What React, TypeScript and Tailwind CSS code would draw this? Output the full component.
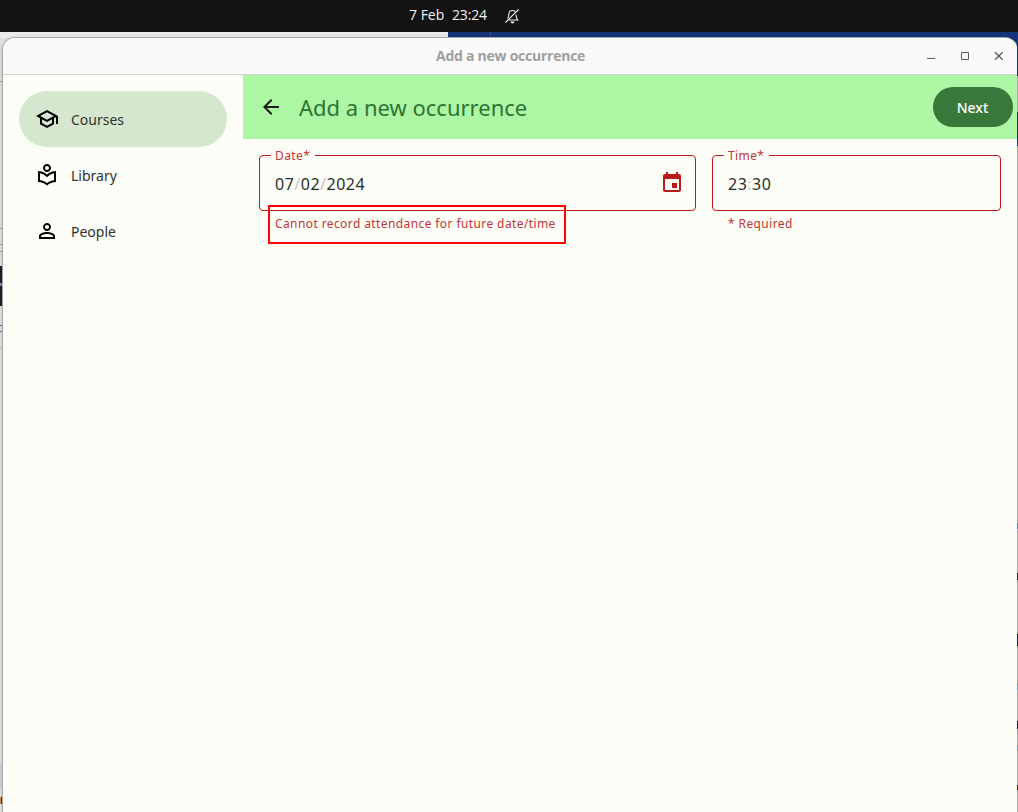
import type { ReactNode } from "react";
import {
  MdArrowBack,
  MdEvent,
  MdOutlineLocalLibrary,
  MdOutlineSchool,
  MdPersonOutline,
} from "react-icons/md";

function MutedBell() {
  return (
    <svg width="16" height="16" viewBox="0 0 16 16" fill="none" stroke="#f0f0f0" strokeWidth="1.1">
      <path d="M3.600 10.500c1-1 1.100-2 1.200-4.200C5 3.700 6.300 2.500 8.500 2.500c1.200 0 2.100.4 2.700 1.100M12 6.500c.1 2.500.4 4.200 1.700 5.500H5" />
      <path d="M1.500 14.500 14.500 1.500" />
      <path d="M6.500 13.500h4c-.3 1.300-1 1.900-2 1.900s-1.700-.6-2-1.900z" fill="#f0f0f0" stroke="none" />
    </svg>
  );
}

function TopBar() {
  return (
    <header className="flex h-8 shrink-0 items-start bg-[#131313] pt-[5px] pl-[409px] font-['Open_Sans','Noto_Sans',sans-serif] text-[14px] leading-5 text-[#f2f2f2]">
      <span className="w-[43px] whitespace-nowrap">7 Feb</span>
      <span className="w-[52px] tracking-[-0.15px]">23:24</span>
      <span className="pt-[3px]">
        <MutedBell />
      </span>
    </header>
  );
}

function TitleBar() {
  return (
    <div className="flex h-[37px] shrink-0 items-center border-b border-[#d3d3d3] bg-[#fafafa]">
      <div className="w-[915px] pl-[433px] font-['Open_Sans','Noto_Sans',sans-serif] text-[14px] leading-5 font-bold tracking-[-0.25px] whitespace-nowrap text-[#9f9f9f]">
        Add a new occurrence
      </div>
      <svg width="96" height="16" viewBox="0 0 96 16" fill="none" stroke="#5c5c5c">
        <path d="M9 10.500h8" />
        <path d="M43.500 4.500h7v7h-7z" />
        <path d="m77 4.200 7.600 7.600M84.600 4.200 77 11.800" strokeWidth="1.300" />
      </svg>
    </div>
  );
}

function NavItem({ icon, label, active }: { icon: ReactNode; label: string; active?: boolean }) {
  return (
    <div
      className={`flex h-14 items-center gap-3 rounded-full pl-4 text-[14px] text-[#30342f] ${
        active ? "bg-[#d5e8cf]" : ""
      }`}
    >
      <span className="text-2xl text-black">{icon}</span>
      <span className="pt-px">{label}</span>
    </div>
  );
}

function Field({
  label,
  helper,
  width,
  icon,
  children,
}: {
  label: string;
  helper: string;
  width: string;
  icon?: ReactNode;
  children: ReactNode;
}) {
  return (
    <div className={width}>
      <div className="relative flex h-14 items-center justify-between rounded-[4px] border border-[#ba1a1a] pr-[11px] pl-[15px]">
        <span className="absolute -top-2 left-[11px] bg-[#fcfdf6] pr-[5px] pl-1 text-[12px] leading-4 tracking-[0.4px] text-[#c33536]">
          {label}
        </span>
        <span className="pt-px text-[16px] leading-6 tracking-[0.5px] text-[#2b2d2a]">{children}</span>
        {icon}
      </div>
      <p className="pt-[5px] pl-4 text-[12px] leading-4 tracking-[0.4px] whitespace-nowrap text-[#c33536]">{helper}</p>
    </div>
  );
}

function Sep({ children }: { children: string }) {
  return <span className="text-[#c4c6c0]">{children}</span>;
}

/* Slivers of the windows behind the active one, top to bottom. */
const leftEdge = [
  "h-[43px] bg-[#e1e2e2]",
  "h-[147px] border-t border-[#aaaaaa]",
  "h-4 border-t border-[#aaaaaa]",
  "h-2 border-y border-r border-[#999999]",
  "h-3.5",
  "h-[17px] bg-[#201f28]",
  "h-[3px] bg-[#7891b0]",
  "h-5 bg-[#201f28]",
  "h-[19px]",
  "h-[7px] border-y border-[#4867c0]",
  "h-[15px]",
  "h-[416px] border-t border-[#bbbbbb]",
  "h-[26px] bg-[#d3d7df]",
  "h-2",
  "h-[7px] border-l border-[#d8934a] bg-[#23375c]",
];

const rightEdge = [
  "h-[38px] bg-[#14357a]",
  "h-9 bg-[#a9a9ae]",
  "h-[34px] bg-[#173770]",
  "h-[377px]",
  "h-1.5 bg-[#647ba5]",
  "h-11",
  "h-[7px] bg-[#272522]",
  "h-[54px]",
  "h-3 bg-[#15243c]",
  "h-[37px]",
  "h-[7px] bg-[#7c9db2]",
  "h-[31px]",
  "h-2 bg-[#171820]",
  "h-4",
  "h-1.5 bg-[#7c9db2]",
  "h-[34px]",
  "h-[5px] bg-[#4b2418]",
];

export default function App() {
  return (
    <div className="flex h-[812px] w-[1018px] flex-col overflow-hidden bg-[#e4e4e5] font-['Noto_Sans',sans-serif]">
      <TopBar />
      <div className="flex h-1.5 shrink-0">
        <div className="w-[448px] bg-[#e9eaea]" />
        <div className="w-[42px] bg-[#14357a]" />
        <div className="flex-1 border-l border-[#3a5590] bg-[#14357a]" />
      </div>
      <div className="flex min-h-0 flex-1">
        <div className="w-[3px] shrink-0">
          {leftEdge.map((cls, i) => (
            <div key={i} className={cls} />
          ))}
        </div>
        <div className="flex w-[1014px] bg-linear-to-r from-[#e1e2e2] from-50% to-[#14357a] to-50%">
          <section className="relative flex flex-1 flex-col rounded-t-[12px] bg-[#fcfdf6] shadow-[0_0_0_1px_#a7a8a8,0_1px_5px_#00000040]">
            <div className="overflow-hidden rounded-t-[12px]">
              <TitleBar />
            </div>
            <div className="flex flex-1">
              <nav className="w-60 shrink-0 p-4">
                <NavItem active icon={<MdOutlineSchool />} label="Courses" />
                <NavItem icon={<MdOutlineLocalLibrary />} label="Library" />
                <NavItem icon={<MdPersonOutline />} label="People" />
              </nav>
              <main className="flex-1">
                <div className="flex h-16 items-center bg-[#acf6a4] pr-1 pl-4">
                  <MdArrowBack className="size-6 text-[#1a1c19]" />
                  <h1 className="ml-4 flex-1 text-[22px] leading-7 text-[#2c7533]">Add a new occurrence</h1>
                  <button className="h-10 w-20 rounded-full bg-[#39783b] pt-px pr-px text-[14px] font-medium text-white">
                    Next
                  </button>
                </div>
                <div className="flex gap-4 p-4">
                  <Field
                    width="w-[437px]"
                    label="Date*"
                    helper="Cannot record attendance for future date/time"
                    icon={<MdEvent className="size-6 text-[#ba1a1a]" />}
                  >
                    07<Sep>/</Sep>02<Sep>/</Sep>2024
                  </Field>
                  <Field width="w-[289px]" label="Time*" helper="* Required">
                    23<Sep>:</Sep>30
                  </Field>
                </div>
              </main>
            </div>
            {/* Highlight drawn around the validation message */}
            <div className="absolute top-[167px] left-[265px] h-[39px] w-[298px] border-2 border-[#fe0000]" />
          </section>
        </div>
        <div className="relative w-px shrink-0 bg-[#a9abab]">
          {rightEdge.map((cls, i) => (
            <div key={i} className={cls} />
          ))}
        </div>
      </div>
    </div>
  );
}
